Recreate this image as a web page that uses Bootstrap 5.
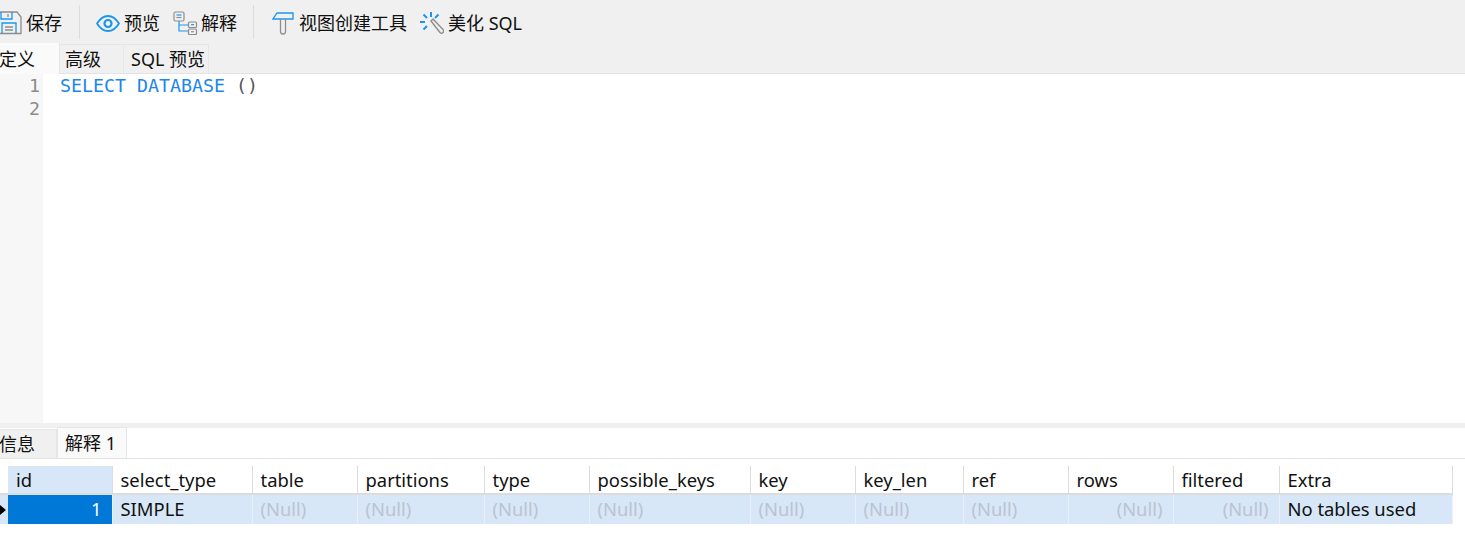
<!DOCTYPE html>
<html lang="zh">
<head>
  <meta charset="UTF-8">
  <title>查询编辑器</title>
  <link rel="stylesheet" href="https://cdn.jsdelivr.net/npm/bootstrap@5.3.2/dist/css/bootstrap.min.css">
  <style>
    html, body { height: 544px; overflow: hidden; background: #fff; }
    body { font-family: "Noto Sans", "Noto Sans CJK SC", sans-serif; font-size: 18px; color: #111; line-height: 1; }
    .tool-bar { height: 43px; background: #f0f0f0; padding-top: 3px; }
    .tool-btn { height: 30px; white-space: nowrap; }
    .tool-sep { width: 1px; height: 34px; background: #dcdcdc; margin-top: -3px; }
    .gap-l12 { margin-left: 13px; }
    .gap-l16 { margin-left: 16px; }
    .gap-l17 { margin-left: 17px; }
    .gap-l18 { margin-left: 18px; }
    .gap-t3 { margin-left: 3px; }
    .gap-t4 { margin-left: 4px; }
    .gap-t5 { margin-left: 5px; }
    .tab-strip { height: 31px; background: #f0f0f0; border-bottom: 1px solid #e3e3e3; }
    .tab-item { height: 29px; margin-top: 1px; border: 1px solid #e6e6e6; border-bottom: 0; border-left: 0; background: #f0f0f0; }
    .tab-on { height: 31px; margin-top: 0; background: #fafafa; border-top: 0; width: 61px; margin-left: -1px; }
    .tab-adv { width: 64px; padding-left: 5px; }
    .tab-sql { width: 85px; padding-left: 7px; }
    .editor-pane { height: 349px; }
    .line-nums { width: 43px; background: #f7f7f7; color: #8c8c8c; text-align: right; padding-right: 3px; }
    .code-area { padding-left: 17px; color: #1c86ee; }
    .line-nums, .code-area { font-family: "DejaVu Sans Mono", monospace; font-size: 18.27px; line-height: 23px; }
    .code-paren { color: #555; }
    .pane-gap { height: 5px; background: #f0f0f0; }
    .result-tabs { height: 31px; border-bottom: 1px solid #e3e3e3; }
    .result-tabs .tab-idle { width: 58px; margin-left: -1px; }
    .result-tabs .tab-active { height: 31px; margin-top: -1px; width: 70px; padding-left: 7px; background: #fafafa; border-left: 1px solid #e6e6e6; }
    .grid-wrap { padding-top: 7px; }
    .grid-table { table-layout: fixed; border-collapse: collapse; font-size: 18.4px; }
    .grid-table th, .grid-table td { font-weight: 400; padding: 0 7px 0 8px; border-right: 1px solid #dcdcdc; white-space: nowrap; overflow: hidden; }
    .grid-table th { height: 28px; border-bottom: 2px solid #dcdcdc; padding-top: 2px; }
    .grid-table td { height: 30px; background: #d7e7f8; border-right-color: #e9f0f9; padding-bottom: 1px; }
    .grid-table th.col-current { background: #d7e7f8; }
    .grid-table th.col-marker { border: 0; border-bottom: 2px solid #dcdcdc; padding: 0; }
    .grid-table td.cell-marker { padding: 0; border: 0; }
    .grid-table td.cell-current { background: #0078d7; color: #fff; text-align: right; padding-right: 10px; }
    .grid-table td.cell-null { color: #bcc3d0; }
    .grid-table td.cell-num { text-align: right; padding-right: 10px; }
    .row-arrow { display: block; width: 0; height: 0; border-left: 6px solid #000; border-top: 5px solid transparent; border-bottom: 5px solid transparent; }
  </style>
</head>
<body>

<!-- Toolbar -->
<div class="tool-bar d-flex align-items-center">
  <div class="tool-btn d-flex align-items-center">
    <svg width="22" height="24" viewBox="0 0 22 24" fill="none" stroke-width="1.3">
      <path d="M0 1H17L21 6V22.500H0" stroke="#8d8d8d"/>
      <path d="M1 1V8H12V1" stroke="#1a96ef"/>
      <path d="M8 3V6" stroke="#8d8d8d"/>
      <path d="M2 22V12H16V22" stroke="#1a96ef"/>
      <path d="M5 16H13M5 19H13" stroke="#8d8d8d"/>
    </svg>
    <span class="gap-t4">保存</span>
  </div>
  <div class="tool-sep gap-l17"></div>
  <div class="tool-btn d-flex align-items-center gap-l16">
    <svg width="24" height="17" viewBox="0 0 24 17" fill="none" stroke="#1a96ef" stroke-width="1.8">
      <path d="M1 8.500C5 2 8.500 1 12 1S19 2 23 8.500C19 15 15.500 16 12 16S5 15 1 8.500Z"/>
      <circle cx="12" cy="8.500" r="3.500" stroke-width="2.200"/>
    </svg>
    <span class="gap-t4">预览</span>
  </div>
  <div class="tool-btn d-flex align-items-center gap-l12">
    <svg width="25" height="24" viewBox="0 0 25 24" fill="none" stroke-width="1.200">
      <rect x="1" y="1" width="10" height="9" rx="1.500" stroke="#8d8d8d"/>
      <path d="M3.500 4H8.500" stroke="#1a96ef"/>
      <path d="M3.500 6.500H8.500" stroke="#8d8d8d"/>
      <path d="M6 10V20H15M6 14H15" stroke="#1a96ef"/>
      <rect x="15.500" y="11" width="8" height="5.500" rx="1" stroke="#8d8d8d"/>
      <rect x="15.500" y="18" width="8" height="5.500" rx="1" stroke="#8d8d8d"/>
      <path d="M18 13.700H21" stroke="#1a96ef"/>
      <path d="M18 20.700H21" stroke="#8d8d8d"/>
    </svg>
    <span class="gap-t3">解释</span>
  </div>
  <div class="tool-sep gap-l16"></div>
  <div class="tool-btn d-flex align-items-center gap-l18">
    <svg width="22" height="24" viewBox="0 0 22 24" fill="none" stroke-width="1.300">
      <path d="M5 2H21V8H1Z" stroke="#1a96ef"/>
      <path d="M8.500 8V20.500A2.500 2.500 0 0 0 13.500 20.500V8" stroke="#8d8d8d"/>
    </svg>
    <span class="gap-t5">视图创建工具</span>
  </div>
  <div class="tool-btn d-flex align-items-center gap-l12">
    <svg width="24" height="24" viewBox="0 0 24 24" fill="none">
      <path d="M11 1V6M0 11H5M3.500 3.500L7 7M18.500 3.500L15 7M3.500 18.500L7 15" stroke="#1a96ef" stroke-width="2"/>
      <path d="M11 10L13 8L23 18.500A2 2 0 0 1 20 21.500Z" stroke="#8d8d8d" stroke-width="1.400"/>
    </svg>
    <span class="gap-t4">美化 SQL</span>
  </div>
</div>

<!-- Query tabs -->
<div class="tab-strip d-flex">
  <div class="tab-item tab-on d-flex align-items-center">定义</div>
  <div class="tab-item tab-adv d-flex align-items-center">高级</div>
  <div class="tab-item tab-sql d-flex align-items-center">SQL 预览</div>
</div>

<!-- Editor -->
<div class="editor-pane d-flex">
  <div class="line-nums"><div>1</div><div>2</div></div>
  <div class="code-area">SELECT DATABASE <span class="code-paren">()</span></div>
</div>
<div class="pane-gap"></div>

<!-- Result tabs -->
<div class="result-tabs d-flex">
  <div class="tab-item tab-idle d-flex align-items-center">信息</div>
  <div class="tab-item tab-active d-flex align-items-center">解释 1</div>
</div>

<!-- Result grid -->
<div class="grid-wrap">
  <table class="grid-table" id="explain-grid"></table>
</div>

<script>
// column widths are read off the result grid
const cols = [
  ['id', 104, '1', 'cell-current'],
  ['select_type', 140, 'SIMPLE', ''],
  ['table', 105, '(Null)', 'cell-null'],
  ['partitions', 127, '(Null)', 'cell-null'],
  ['type', 105, '(Null)', 'cell-null'],
  ['possible_keys', 161, '(Null)', 'cell-null'],
  ['key', 105, '(Null)', 'cell-null'],
  ['key_len', 108, '(Null)', 'cell-null'],
  ['ref', 105, '(Null)', 'cell-null'],
  ['rows', 105, '(Null)', 'cell-null cell-num'],
  ['filtered', 106, '(Null)', 'cell-null cell-num'],
  ['Extra', 173, 'No tables used', '']
];
const markerWidth = 8;
const grid = document.getElementById('explain-grid');
grid.style.width = cols.reduce((sum, c) => sum + c[1], markerWidth) + 'px';
grid.innerHTML = `
  <colgroup><col style="width:${markerWidth}px">${cols.map(c => `<col style="width:${c[1]}px">`).join('')}</colgroup>
  <thead><tr><th class="col-marker"></th>${cols.map((c, i) => `<th class="${i === 0 ? 'col-current' : ''}">${c[0]}</th>`).join('')}</tr></thead>
  <tbody><tr><td class="cell-marker"><span class="row-arrow"></span></td>${cols.map(c => `<td class="${c[3]}">${c[2]}</td>`).join('')}</tr></tbody>`;
</script>
<script src="https://cdn.jsdelivr.net/npm/bootstrap@5.3.2/dist/js/bootstrap.bundle.min.js"></script>
</body>
</html>
